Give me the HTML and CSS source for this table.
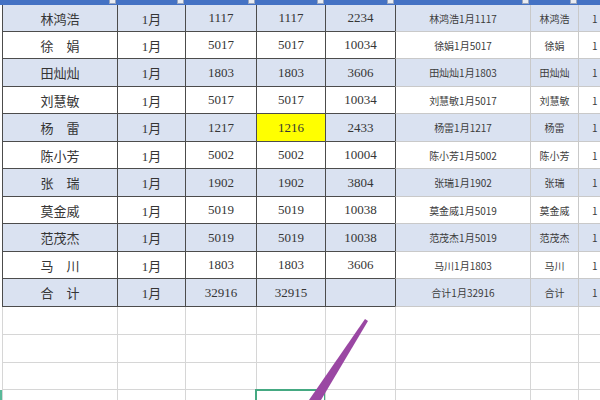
FILE: index.html
```html
<!DOCTYPE html>
<html lang="zh-CN">
<head>
<meta charset="utf-8">
<title>工资表</title>
<link rel="stylesheet" href="styles.css">
</head>
<body>
<div class="sheet">
  <div class="hdr">
    <div class="hs"></div>
    <div class="hc"><span class="dd"></span></div>
    <div class="hc"><span class="dd"></span></div>
    <div class="hc"><span class="dd"></span></div>
    <div class="hc"><span class="dd"></span></div>
    <div class="hc"><span class="dd"></span></div>
    <div class="hc"><span class="dd"></span></div>
    <div class="hc"><span class="dd"></span></div>
    <div class="hc"></div>
  </div>
  <div class="rows">
    <div class="row alt"><div class="s"></div><div class="c d n">林鸿浩</div><div class="c d">1月</div><div class="c d">1117</div><div class="c d">1117</div><div class="c d">2234</div><div class="c m">林鸿浩1月1117</div><div class="c l k">林鸿浩</div><div class="c l e">1</div></div>
    <div class="row"><div class="s"></div><div class="c d n">徐　娟</div><div class="c d">1月</div><div class="c d">5017</div><div class="c d">5017</div><div class="c d">10034</div><div class="c m">徐娟1月5017</div><div class="c l k">徐娟</div><div class="c l e">1</div></div>
    <div class="row alt"><div class="s"></div><div class="c d n">田灿灿</div><div class="c d">1月</div><div class="c d">1803</div><div class="c d">1803</div><div class="c d">3606</div><div class="c m">田灿灿1月1803</div><div class="c l k">田灿灿</div><div class="c l e">1</div></div>
    <div class="row"><div class="s"></div><div class="c d n">刘慧敏</div><div class="c d">1月</div><div class="c d">5017</div><div class="c d">5017</div><div class="c d">10034</div><div class="c m">刘慧敏1月5017</div><div class="c l k">刘慧敏</div><div class="c l e">1</div></div>
    <div class="row alt"><div class="s"></div><div class="c d n">杨　雷</div><div class="c d">1月</div><div class="c d">1217</div><div class="c d y">1216</div><div class="c d">2433</div><div class="c m">杨雷1月1217</div><div class="c l k">杨雷</div><div class="c l e">1</div></div>
    <div class="row"><div class="s"></div><div class="c d n">陈小芳</div><div class="c d">1月</div><div class="c d">5002</div><div class="c d">5002</div><div class="c d">10004</div><div class="c m">陈小芳1月5002</div><div class="c l k">陈小芳</div><div class="c l e">1</div></div>
    <div class="row alt"><div class="s"></div><div class="c d n">张　瑞</div><div class="c d">1月</div><div class="c d">1902</div><div class="c d">1902</div><div class="c d">3804</div><div class="c m">张瑞1月1902</div><div class="c l k">张瑞</div><div class="c l e">1</div></div>
    <div class="row"><div class="s"></div><div class="c d n">莫金威</div><div class="c d">1月</div><div class="c d">5019</div><div class="c d">5019</div><div class="c d">10038</div><div class="c m">莫金威1月5019</div><div class="c l k">莫金威</div><div class="c l e">1</div></div>
    <div class="row alt"><div class="s"></div><div class="c d n">范茂杰</div><div class="c d">1月</div><div class="c d">5019</div><div class="c d">5019</div><div class="c d">10038</div><div class="c m">范茂杰1月5019</div><div class="c l k">范茂杰</div><div class="c l e">1</div></div>
    <div class="row"><div class="s"></div><div class="c d n">马　川</div><div class="c d">1月</div><div class="c d">1803</div><div class="c d">1803</div><div class="c d">3606</div><div class="c m">马川1月1803</div><div class="c l k">马川</div><div class="c l e">1</div></div>
    <div class="row alt"><div class="s"></div><div class="c d n">合　计</div><div class="c d">1月</div><div class="c d">32916</div><div class="c d">32915</div><div class="c d"></div><div class="c m">合计1月32916</div><div class="c l k">合计</div><div class="c l e">1</div></div>
    <div class="row empty"><div class="s"></div><div class="c g"></div><div class="c g"></div><div class="c g"></div><div class="c g"></div><div class="c g"></div><div class="c g"></div><div class="c g"></div><div class="c g"></div></div>
    <div class="row empty"><div class="s"></div><div class="c g"></div><div class="c g"></div><div class="c g"></div><div class="c g"></div><div class="c g"></div><div class="c g"></div><div class="c g"></div><div class="c g"></div></div>
    <div class="row empty"><div class="s"></div><div class="c g"></div><div class="c g"></div><div class="c g"></div><div class="c g"></div><div class="c g"></div><div class="c g"></div><div class="c g"></div><div class="c g"></div></div>
    <div class="row empty last"><div class="s hl"></div><div class="c g"></div><div class="c g"></div><div class="c g"></div><div class="c g sel"></div><div class="c g"></div><div class="c g"></div><div class="c g"></div><div class="c g"></div></div>
  </div>
  <svg class="arrow" width="600" height="400" viewBox="0 0 600 400" aria-hidden="true">
    <polygon points="365,319 368,321 321,400 309,400" fill="#9a47a3"/>
  </svg>
</div>
</body>
</html>
```
FILE: styles.css
```css
html, body {
  margin: 0;
  padding: 0;
  background: #fff;
}
body {
  width: 600px;
  height: 400px;
  overflow: hidden;
}
.sheet {
  position: relative;
  width: 600px;
  height: 400px;
  overflow: hidden;
  font-family: "Liberation Serif", "Noto Sans CJK SC", serif;
  color: #353535;
}
.hdr, .row {
  display: grid;
  grid-template-columns: 2px 115px 68px 71px 69px 70px 135px 48px 1fr;
}
.hdr {
  height: 5px;
  background: #4472c4;
}
.hc {
  position: relative;
}
.dd {
  position: absolute;
  right: 1px;
  top: 0;
  width: 5px;
  height: 3px;
  background: #e9ecf2;
  border: 1px solid #9aa6bd;
  border-top: none;
}
.rows {
  display: flex;
  flex-direction: column;
}
.row {
  height: 27px;
  box-sizing: border-box;
}
.row:nth-child(2n+3) {
  height: 28px;
}
.row.alt {
  background: #dae2f1;
}
.row.empty {
  height: 28px;
}
.row.empty:nth-child(14) {
  height: 27px;
}
.row.last {
  height: 20px;
}
.s {
  background: #fff;
}
.s.hl {
  background: #58b999;
}
.c {
  box-sizing: border-box;
  display: flex;
  align-items: center;
  justify-content: center;
  font-size: 13px;
  white-space: nowrap;
  overflow: hidden;
  border-left: 1px solid #c9c9c9;
  border-bottom: 1px solid #c9c9c9;
}
.c.d {
  border-left-color: #4c4c4c;
  border-bottom-color: #4c4c4c;
}
.c.m {
  border-left-color: #4c4c4c;
  font-family: "Noto Sans CJK SC", sans-serif;
  font-size: 10px;
  color: #3c3c3c;
}
.c.k {
  font-family: "Noto Sans CJK SC", sans-serif;
  font-size: 10px;
  color: #3c3c3c;
}
.c.e {
  justify-content: flex-start;
  padding-left: 13px;
  font-family: "Noto Sans CJK SC", sans-serif;
  font-size: 10px;
  color: #3c3c3c;
}
.c.y {
  background: #ffff00;
}
.c.g {
  border-left-color: #d6d6d6;
  border-bottom-color: #d6d6d6;
}
.c.sel {
  outline: 2px solid #45a982;
  outline-offset: -1px;
}
.arrow {
  position: absolute;
  left: 0;
  top: 0;
  pointer-events: none;
}
```
